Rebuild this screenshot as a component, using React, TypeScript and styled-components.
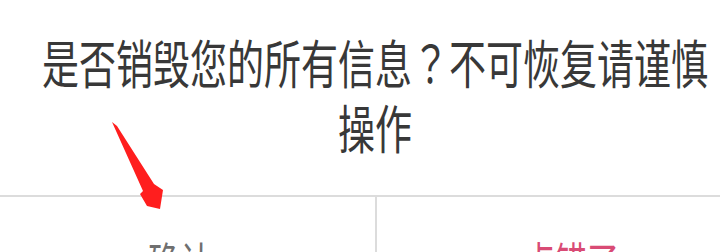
import React from "react";
import styled, { createGlobalStyle } from "styled-components";

const Global = createGlobalStyle`
  html, body { margin: 0; padding: 0; background: #ffffff; }
  body { width: 720px; height: 252px; overflow: hidden; position: relative; }
  #root { width: 720px; height: 252px; overflow: hidden; position: relative; }
`;

const FONT = `"Noto Sans CJK SC", "Noto Sans", sans-serif`;

const Dialog = styled.div`
  width: 780px;
  margin-left: -15px;
  background: #ffffff;
  display: flex;
  flex-direction: column;
  font-family: ${FONT};
`;

const MessageArea = styled.div`
  height: 197px;
  box-sizing: border-box;
  padding: 31px 45px 0;
  border-bottom: 2px solid #dcdcdc;
`;

const MessageText = styled.p`
  margin: 0;
  font-size: 37px;
  line-height: 45.7px;
  color: #383838;
  text-align: center;
  transform: scaleY(1.4);
  transform-origin: top center;
`;

const Punct = styled.span`
  font-family: "Noto Sans CJK JP", "Noto Sans CJK SC", sans-serif;
`;

const ButtonRow = styled.div`
  display: grid;
  grid-template-columns: 1fr 1fr;
  height: 120px;
`;

const ActionButton = styled.div<{ $primary?: boolean }>`
  display: flex;
  justify-content: center;
  align-items: flex-start;
  padding-top: 35px;
  box-sizing: border-box;
  border-left: ${(p) => (p.$primary ? "2px solid #dcdcdc" : "none")};
  color: ${(p) => (p.$primary ? "#d94b75" : "#6f6f6f")};
`;

const ButtonLabel = styled.span`
  font-size: 32px;
  line-height: 40px;
  transform: scaleY(1.4);
  transform-origin: top center;
  display: inline-block;
`;

const Annotation = styled.svg`
  position: absolute;
  left: 0;
  top: 0;
  width: 720px;
  height: 252px;
  pointer-events: none;
`;

export default function App() {
  return (
    <>
      <Global />
      <Dialog>
        <MessageArea>
          <MessageText>
            是否销毁您的所有信息<Punct>？</Punct>不可恢复请谨慎操作
          </MessageText>
        </MessageArea>
        <ButtonRow>
          <ActionButton>
            <ButtonLabel>确认</ButtonLabel>
          </ActionButton>
          <ActionButton $primary>
            <ButtonLabel>点错了</ButtonLabel>
          </ActionButton>
        </ButtonRow>
      </Dialog>
      <Annotation viewBox="0 0 720 252">
        <polygon
          points="112,122 117,126 154,184 163,190 160,209 147,206 140,194 143,191"
          fill="#ff1e1e"
        />
      </Annotation>
    </>
  );
}
